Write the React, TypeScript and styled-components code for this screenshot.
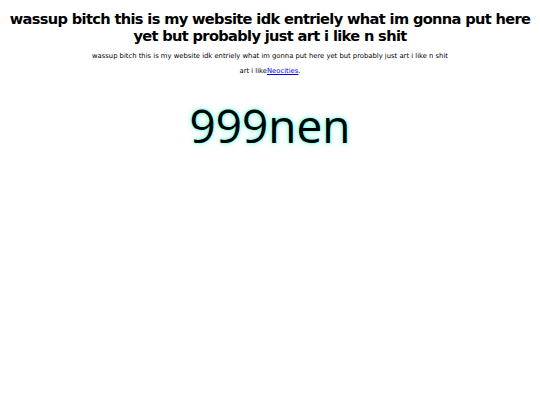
import React from 'react'
import styled, { createGlobalStyle } from 'styled-components'

const GlobalStyle = createGlobalStyle`
  body {
    margin: 8px;
    background: #fff;
    color: #000;
    font-family: "DejaVu Sans", Verdana, sans-serif;
  }
`

const Page = styled.main`
  display: flex;
  flex-direction: column;
  align-items: center;
  text-align: center;
`

const Title = styled.h1`
  font-size: 14.6px;
  font-weight: bold;
  letter-spacing: -0.65px;
  line-height: 17px;
  margin: 2px 0 8px;
`

const Blurb = styled.p`
  font-size: 6.8px;
  line-height: 8px;
  margin: 0 0 7px;
`

const Link = styled.a`
  color: #0000ee;
  text-decoration: underline;
`

const Logo = styled.div`
  margin-top: 12px;
  font-family: "Open Sans", sans-serif;
  font-size: 46px;
  color: #000;
  text-shadow: 0 0 5px #5fffe0, 0 0 2px #5fffe0;
`

export default function App() {
  return (
    <>
      <GlobalStyle />
      <Page>
        <Title>wassup bitch this is my website idk entriely what im gonna put here yet but probably just art i like n shit</Title>
        <Blurb>wassup bitch this is my website idk entriely what im gonna put here yet but probably just art i like n shit</Blurb>
        <Blurb>art i like<Link href="https://neocities.org">Neocities</Link>.</Blurb>
        <Logo>999nen</Logo>
      </Page>
    </>
  )
}
